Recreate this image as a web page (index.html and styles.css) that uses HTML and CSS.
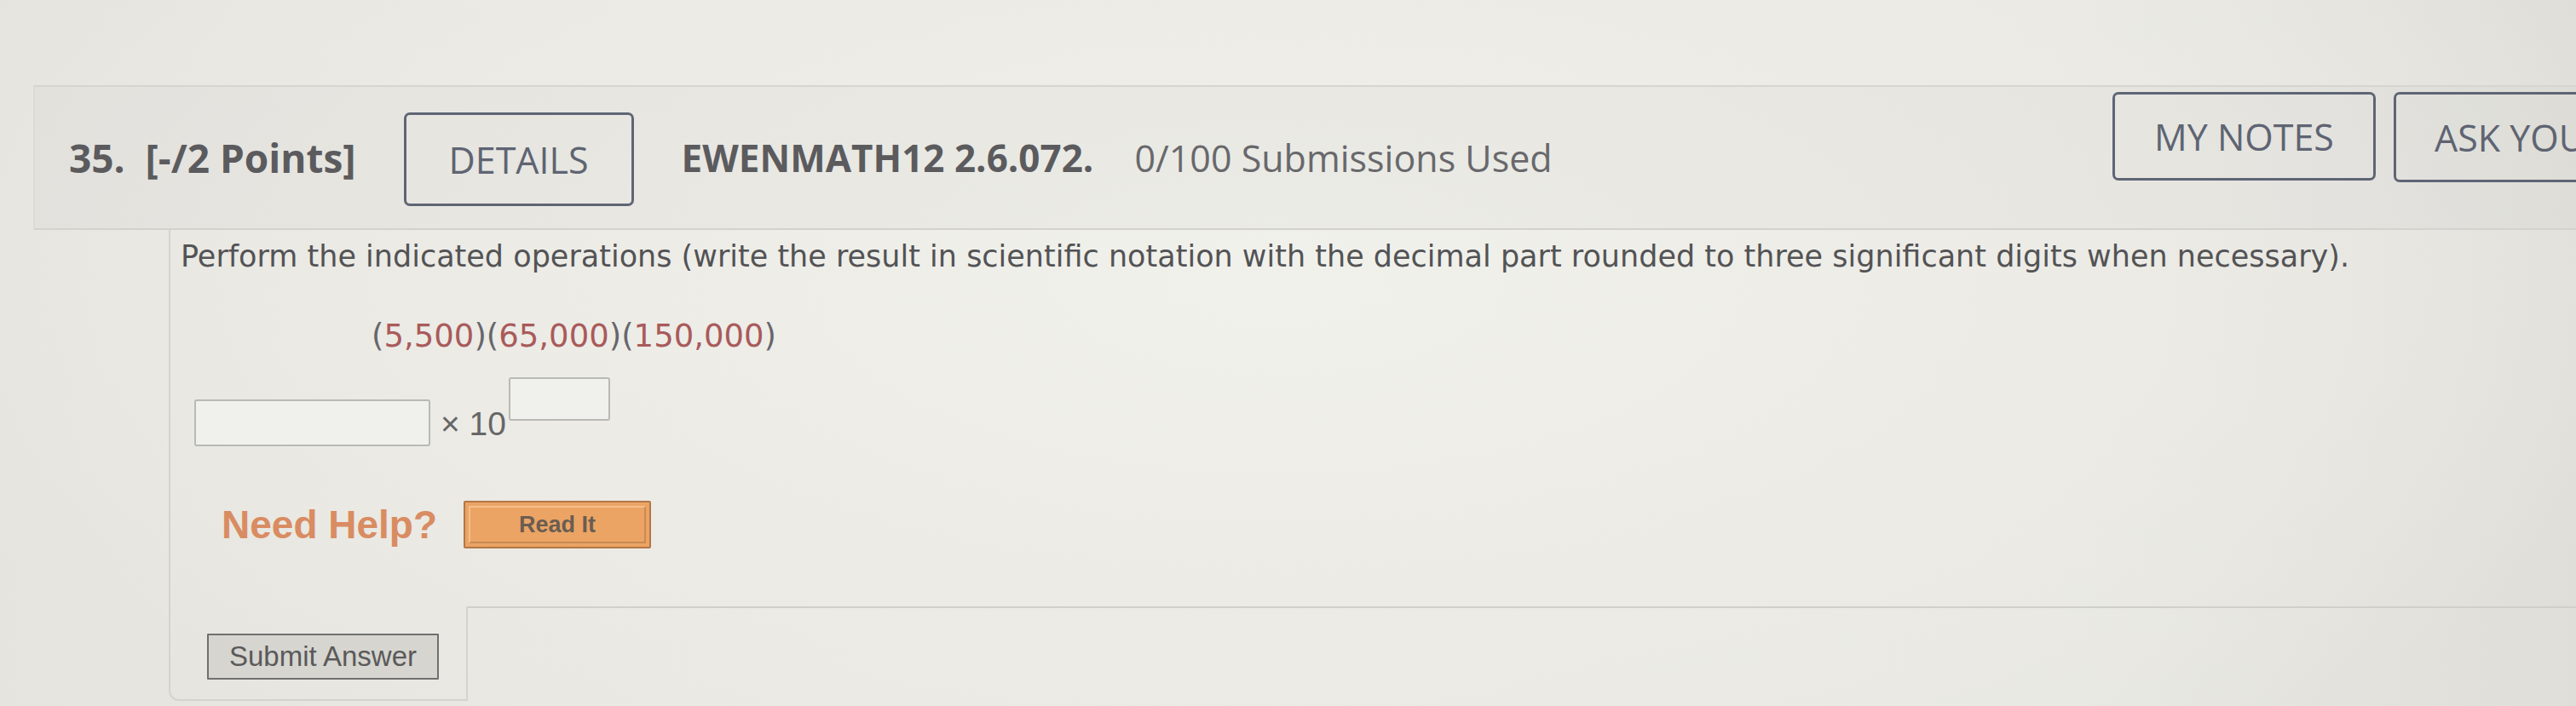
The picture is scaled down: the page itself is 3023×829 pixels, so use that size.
FILE: index.html
```html
<!DOCTYPE html>
<html lang="en">
<head>
<meta charset="utf-8">
<title>Question 35</title>
<link rel="stylesheet" href="styles.css">
</head>
<body>
<div class="page">
  <div class="qhead">
    <span class="qnum">35.&nbsp; [-/2 Points]</span>
    <button class="btn details">DETAILS</button>
    <span class="qcode">EWENMATH12 2.6.072.</span>
    <span class="subs">0/100 Submissions Used</span>
    <div class="right-btns">
      <button class="btn notes">MY NOTES</button>
      <button class="btn ask">ASK YOUR TEACHER</button>
    </div>
  </div>
  <div class="qbody">
    <p class="instr">Perform the indicated operations (write the result in scientific notation with the decimal part rounded to three significant digits when necessary).</p>
    <p class="expr">(<span class="num">5,500</span>)(<span class="num">65,000</span>)(<span class="num">150,000</span>)</p>
    <div class="answer">
      <span class="box mant"></span>
      <span class="times">× 10</span>
      <span class="box expo"></span>
    </div>
    <div class="help">
      <span class="need">Need Help?</span>
      <button class="readit"><span class="readit-inner">Read It</span></button>
    </div>
  </div>
  <div class="qfoot">
    <div class="submit-cell"><button class="submit">Submit Answer</button></div>
    <div class="foot-rest"></div>
  </div>
</div>
</body>
</html>
```
FILE: styles.css
```css
html, body {
  margin: 0;
  padding: 0;
}
body {
  width: 3023px;
  height: 829px;
  overflow: hidden;
  background:
    radial-gradient(ellipse 1700px 700px at 1500px 330px, #f1f1ec 0%, #ecebe6 55%, rgba(228,227,221,0) 100%),
    linear-gradient(90deg, #e5e4de 0%, #eae9e3 40%, #e8e8e3 80%, #dfded8 100%);
}
.page {
  padding-top: 100px;
}
.qhead {
  box-sizing: border-box;
  width: 3130px;
  height: 170px;
  margin-left: 39px;
  padding-left: 40px;
  display: flex;
  align-items: center;
  background: rgba(120, 115, 100, 0.035);
  border-top: 2px solid #d6d5cf;
  border-left: 2px solid #dcdbd5;
  border-bottom: 2px solid #d3d2cc;
  font-family: "Open Sans", "Liberation Sans", sans-serif;
  color: #5b5b5e;
  font-size: 43px;
}
.qnum {
  font-weight: 700;
  font-size: 46px;
  white-space: nowrap;
}
.btn {
  box-sizing: border-box;
  font-family: "Open Sans", "Liberation Sans", sans-serif;
  font-size: 43px;
  color: #5e6472;
  background: transparent;
  border: 3px solid #5f6575;
  border-radius: 7px;
  padding: 0;
  white-space: nowrap;
}
.details {
  width: 270px;
  height: 110px;
  margin-left: 56px;
  margin-top: 4px;
}
.qcode {
  font-weight: 700;
  font-size: 44px;
  margin-left: 56px;
  white-space: nowrap;
}
.subs {
  margin-left: 48px;
  white-space: nowrap;
  color: #68686b;
}
.right-btns {
  margin-left: auto;
  align-self: flex-start;
  margin-top: 6px;
  display: flex;
  gap: 21px;
}
.notes {
  width: 309px;
  height: 104px;
}
.ask {
  width: 360px;
  height: 106px;
  text-align: left;
  padding-left: 45px;
}
.qbody {
  margin-left: 198px;
  border-left: 2px solid #d4d3cd;
  padding: 9px 0 68px 12px;
}
.instr {
  margin: 0;
  font-family: "DejaVu Sans", Verdana, sans-serif;
  font-size: 35px;
  line-height: 44px;
  color: #535355;
  white-space: nowrap;
}
.expr {
  margin: 50px 0 0 224px;
  font-family: "DejaVu Sans", Verdana, sans-serif;
  font-size: 37px;
  line-height: 44px;
  color: #66666a;
}
.num {
  color: #a95a5a;
}
.answer {
  margin-top: 26px;
  margin-left: 16px;
  display: flex;
  align-items: flex-end;
}
.box {
  box-sizing: border-box;
  display: block;
  background: #f0f0ec;
  border: 2px solid #b9b9b5;
  border-radius: 3px;
}
.mant {
  width: 277px;
  height: 55px;
}
.times {
  font-family: "Liberation Sans", Arial, sans-serif;
  font-size: 39px;
  line-height: 40px;
  color: #666;
  margin-left: 12px;
  margin-bottom: 6px;
}
.expo {
  width: 119px;
  height: 51px;
  margin-left: 3px;
  margin-bottom: 30px;
}
.help {
  margin-top: 64px;
  margin-left: 48px;
  display: flex;
  align-items: center;
}
.need {
  font-family: "Liberation Sans", Arial, sans-serif;
  font-weight: 700;
  font-size: 46px;
  color: #d98c62;
}
.readit {
  box-sizing: border-box;
  width: 220px;
  height: 56px;
  margin-left: 31px;
  padding: 4px;
  background: #eba464;
  border: 2px solid #b47646;
  border-radius: 2px;
}
.readit-inner {
  box-sizing: border-box;
  display: flex;
  align-items: center;
  justify-content: center;
  height: 100%;
  border: 2px solid #c98a52;
  border-top-color: #f3c08e;
  border-left-color: #f3c08e;
  font-family: "Liberation Sans", Arial, sans-serif;
  font-weight: 700;
  font-size: 27px;
  color: #6a5d52;
}
.qfoot {
  display: flex;
  margin-left: 198px;
}
.submit-cell {
  box-sizing: border-box;
  width: 351px;
  padding: 32px 34px 23px 43px;
  border-left: 2px solid #d4d3cd;
  border-right: 2px solid #d4d3cd;
  border-bottom: 2px solid #d4d3cd;
  border-bottom-left-radius: 12px;
}
.submit {
  box-sizing: border-box;
  width: 272px;
  height: 54px;
  padding: 0;
  background: #d6d5d0;
  border: 2px solid #707070;
  border-radius: 1px;
  font-family: "Liberation Sans", Arial, sans-serif;
  font-size: 33px;
  color: #5a5a5a;
}
.foot-rest {
  flex: 1;
  border-top: 2px solid #d0cfc9;
}
```
